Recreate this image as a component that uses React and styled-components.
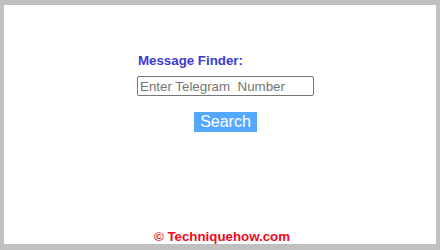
import React from "react";
import styled, { createGlobalStyle } from "styled-components";

const Global = createGlobalStyle`
  html, body { margin: 0; padding: 0; }
  body {
    background: #c0c0c0;
    font-family: "Liberation Sans", Arial, sans-serif;
  }
  #root { padding: 5px 4px 6px 4px; }
`;

const Frame = styled.div`
  background: #ffffff;
  height: 239px;
  display: flex;
  flex-direction: column;
`;

const Form = styled.form`
  width: 177px;
  margin: 48px 0 0 133px;
  display: flex;
  flex-direction: column;
`;

const Label = styled.label`
  font-size: 13.3px;
  font-weight: bold;
  line-height: 15px;
  color: #3b3bd3;
  padding-left: 1px;
`;

const Input = styled.input`
  box-sizing: border-box;
  margin-top: 8px;
  width: 177px;
  height: 20px;
  border: 1px solid #767676;
  border-radius: 2px;
  padding: 1px 2px;
  font-family: "Liberation Sans", Arial, sans-serif;
  font-size: 13.333px;
  color: #000;
  outline: none;
  &::placeholder { color: #757575; white-space: pre; }
`;

const Button = styled.button`
  align-self: center;
  margin-top: 16px;
  height: 20px;
  padding: 0 6px;
  border: none;
  background: #55a8ff;
  color: #ffffff;
  font-family: "Liberation Sans", Arial, sans-serif;
  font-size: 16px;
  line-height: 20px;
  cursor: pointer;
`;

const Footer = styled.div`
  margin-top: auto;
  padding-left: 4px;
  text-align: center;
  font-size: 13.3px;
  font-weight: bold;
  line-height: 15px;
  color: #ee0a1c;
`;

export default function App() {
  return (
    <>
      <Global />
      <Frame>
        <Form onSubmit={(e) => e.preventDefault()}>
          <Label htmlFor="tg">Message Finder:</Label>
          <Input id="tg" type="text" placeholder="Enter Telegram  Number" />
          <Button type="submit">Search</Button>
        </Form>
        <Footer>© Techniquehow.com</Footer>
      </Frame>
    </>
  );
}
